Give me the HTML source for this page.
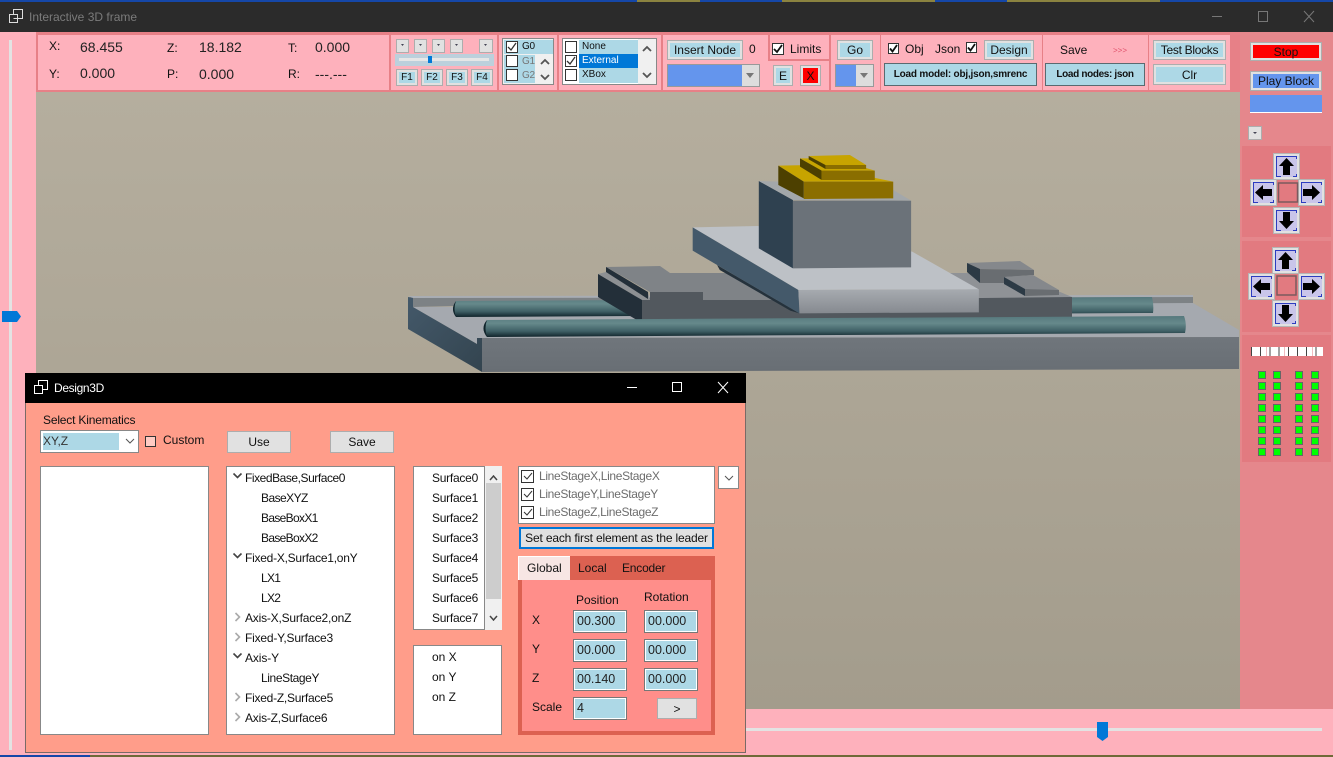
<!DOCTYPE html>
<html><head><meta charset="utf-8"><style>
html,body{margin:0;padding:0;width:1333px;height:757px;overflow:hidden;background:#2b2b2b}
body{position:relative;font-family:"Liberation Sans",sans-serif;font-size:12px;color:#111}
div,span,svg{position:absolute;box-sizing:border-box}
.t{white-space:nowrap;line-height:16px;height:16px}
.v{font-size:14px;line-height:18px;height:18px;color:#222;white-space:nowrap}
.b{background:#e1e1e1;border:1px solid #adadad;text-align:center;white-space:nowrap}
.bi{background:#add8e6;border:3px solid #e1e1e1;outline:1px solid #adadad;outline-offset:-1px;text-align:center;white-space:nowrap;display:flex;align-items:center;justify-content:center}
.cb{width:12px;height:12px;background:#fff;border:1px solid #333}
.lb{background:#add8e6}
.white{background:#fff;border:1px solid #888}
.s10{font-size:10px}
.in{background:#add8e6;border:1px solid #777;box-shadow:inset 0 0 0 1px #fff;padding-left:3px;font-size:12.5px;line-height:21px;color:#222}
</style></head><body>

<!-- wallpaper strips -->
<div style="left:0;top:0;width:1333px;height:2px;background:#1547a8"></div>
<div style="left:637px;top:0;width:63px;height:2px;background:#8b8340"></div>
<div style="left:782px;top:0;width:153px;height:2px;background:#8b8340"></div>
<div style="left:1007px;top:0;width:153px;height:2px;background:#8b8340"></div>
<div style="left:0;top:755px;width:1333px;height:2px;background:#6f6a38"></div>
<div style="left:0;top:755px;width:90px;height:2px;background:#1547a8"></div>

<!-- title bar -->
<div style="left:0;top:2px;width:1333px;height:30px;background:#2b2b2b"></div>
<svg style="left:8px;top:8px" width="16" height="16" viewBox="0 0 16 16" fill="none" stroke="#ddd" stroke-width="1"><rect x="5.5" y="1.5" width="9" height="9"/><rect x="1.5" y="6.5" width="8" height="8" fill="#2b2b2b"/><line x1="5.5" y1="10.5" x2="9.5" y2="10.5"/></svg>
<div class="t" style="left:29px;top:9px;color:#7b7b7b">Interactive 3D frame</div>
<svg style="left:1205px;top:8px" width="120" height="16" fill="none" stroke="#777" stroke-width="1"><line x1="7" y1="8.5" x2="17" y2="8.5"/><rect x="53.5" y="3.5" width="9" height="10"/><path d="M99 3l10 11M109 3l-10 11"/></svg>

<!-- main background -->
<div style="left:0;top:32px;width:36px;height:723px;background:#feb1bc"></div>
<div style="left:36px;top:92px;width:1204px;height:618px;background:linear-gradient(#b5ae9e,#a39c8c)"></div>

<!-- 3D scene -->
<svg style="left:400px;top:140px" width="840" height="240">
<defs>
<linearGradient id="rod" x1="0" y1="0" x2="0" y2="1"><stop offset="0" stop-color="#56797d"/><stop offset=".35" stop-color="#66898b"/><stop offset=".72" stop-color="#3f6066"/><stop offset="1" stop-color="#10232a"/></linearGradient>
<linearGradient id="fr" x1="0" y1="0" x2="0" y2="1"><stop offset="0" stop-color="#a7abb0"/><stop offset="1" stop-color="#868a90"/></linearGradient>
<linearGradient id="lf" x1="0" y1="0" x2="1" y2="1"><stop offset="0" stop-color="#44596a"/><stop offset="1" stop-color="#33444f"/></linearGradient>
<linearGradient id="bf" x1="0" y1="0" x2="0" y2="1"><stop offset="0" stop-color="#70767c"/><stop offset="1" stop-color="#686e74"/></linearGradient>
</defs>
<g transform="translate(-400 -140)">
<!-- base -->
<polygon points="408,297 1193,296 1193,303 1153,305 453,306 413,307 413,298" fill="#7d8285"/>
<polygon points="408,296 1193,295 1193,297 413,298" fill="#a9adb3"/>
<polygon points="413,307 1193,303 1239,330 1239,337 482,338 477,338 477,344" fill="#a5a9af"/>
<polygon points="408,297 413,298 413,307 477,344 477,338 482,338 482,372 408,329" fill="url(#lf)"/>
<polygon points="482,338 1239,337 1239,369 482,372" fill="url(#bf)"/>
<!-- rear rod -->
<path d="M456 301L1152 297Q1154 305 1153 313L456 317Q450 309 456 301Z" fill="url(#rod)"/>
<path d="M456 301Q450 309 456 317Q453 309 456 301Z" fill="#10232a"/>
<!-- carriage -->
<polygon points="950,273 1015,273 1072,297 979,300" fill="#8f9296"/>
<polygon points="606,267 660,266 670,273 730,273 790,300 703,300 703,292 650,292" fill="#7f8387"/>
<polygon points="598,274 642,300 650,300 648,292 606,272" fill="#8d9093"/>
<polygon points="598,274 598,297 642,323 642,300" fill="#232f39"/>
<polygon points="606,267 606,272 648,299 648,292" fill="#232f39"/>
<polygon points="642,300 650,300 650,292 703,292 703,300 790,300 1072,297 1072,321 642,323" fill="#52585e"/>
<!-- front rod -->
<path d="M487 320L1184 316Q1187 324 1185 333L487 337Q480 328 487 320Z" fill="url(#rod)"/>
<path d="M487 320Q480 328 487 337Q484 328 487 320Z" fill="#10232a"/>
<!-- right blocks -->
<polygon points="967,263 1020,261 1034,270 980,269" fill="#85888c"/>
<polygon points="967,263 967,272 980,283 980,269" fill="#2c3a45"/>
<polygon points="980,269 1034,270 1034,275 1004,277 1004,283 980,283" fill="#696d71"/>
<polygon points="1004,277 1033,275 1059,290 1025,289" fill="#85888c"/>
<polygon points="1004,277 1004,284 1025,296 1025,289" fill="#2c3a45"/>
<polygon points="1025,289 1059,290 1059,295 1025,296" fill="#696d71"/>
</g>
<g transform="scale(.542 .3333)">
<polygon points="585,375 590,390 720,512 737,520" fill="#25323c"/>
<polygon points="540,262 660,258 945,335 1068,448 735,450" fill="#bdc1c6"/>
<polygon points="540,262 540,332 737,520 735,450" fill="#44596a"/>
<polygon points="735,450 1068,448 1068,517 737,520" fill="url(#fr)"/>
<polygon points="662,123 662,325 725,385 725,180" fill="#2f4150"/>
<polygon points="725,182 943,182 943,382 725,385" fill="#6b7279"/>
<polygon points="662,123 725,180 943,182 910,150 700,125" fill="#a3a7aa"/>
<polygon points="698,77 760,75 910,125 745,125" fill="#c7a400"/>
<polygon points="698,77 698,135 745,175 745,125" fill="#4d4000"/>
<polygon points="745,125 910,125 910,175 745,177" fill="#8b6e00"/>
<polygon points="738,55 800,55 876,92 778,92" fill="#c7a400"/>
<polygon points="738,55 738,80 778,120 778,92" fill="#4d4000"/>
<polygon points="778,92 876,92 876,120 778,120" fill="#8a6e00"/>
<polygon points="754,48 830,45 860,75 785,75" fill="#c7a400"/>
<polygon points="754,48 754,58 785,87 785,75" fill="#4d4000"/>
<polygon points="785,75 860,75 860,87 785,87" fill="#8a6e00"/>
</g>
</svg>

<!-- toolbar -->
<div style="left:36px;top:32px;width:1204px;height:60px;background:#e78087"></div>
<div style="left:38px;top:35px;width:1192px;height:55px;background:#feb1bc"></div>
<div style="left:389px;top:35px;width:2px;height:55px;background:#e78087"></div>
<div style="left:497px;top:35px;width:2px;height:55px;background:#e78087"></div>
<div style="left:557px;top:35px;width:2px;height:55px;background:#e78087"></div>
<div style="left:661px;top:35px;width:2px;height:55px;background:#e78087"></div>
<div style="left:768px;top:35px;width:2px;height:26px;background:#e78087"></div>
<div style="left:768px;top:59px;width:62px;height:2px;background:#e78087"></div>
<div style="left:829px;top:35px;width:2px;height:55px;background:#e78087"></div>
<div style="left:880px;top:35px;width:1px;height:55px;background:#e78087"></div>
<div style="left:1042px;top:35px;width:1px;height:55px;background:#e78087"></div>
<div style="left:1148px;top:35px;width:1px;height:55px;background:#e78087"></div>

<div class="t" style="left:49px;top:38px">X:</div><div class="v" style="left:80px;top:38px">68.455</div>
<div class="t" style="left:167px;top:40px">Z:</div><div class="v" style="left:199px;top:38px">18.182</div>
<div class="t" style="left:288px;top:40px">T:</div><div class="v" style="left:315px;top:38px">0.000</div>
<div class="t" style="left:49px;top:66px">Y:</div><div class="v" style="left:80px;top:64px">0.000</div>
<div class="t" style="left:167px;top:66px">P:</div><div class="v" style="left:199px;top:65px">0.000</div>
<div class="t" style="left:288px;top:66px">R:</div><div class="v" style="left:315px;top:65px">---.---</div>

<!-- small buttons -->
<svg style="left:395px;top:38px" width="100" height="16">
<g fill="#e1e1e1" stroke="#adadad"><rect x="1.5" y="1.5" width="12" height="13"/><rect x="19.5" y="1.5" width="12" height="13"/><rect x="37.5" y="1.5" width="12" height="13"/><rect x="55.5" y="1.5" width="12" height="13"/><rect x="84.5" y="1.5" width="13" height="13"/></g>
<g fill="#445"><path d="M6 6h3L7.500 8zM24 6h3L25.500 8zM42 6h3L43.500 8zM60 6h3L61.500 8zM89 6h3L90.500 8z"/></g></svg>
<div style="left:395px;top:54px;width:99px;height:12px;background:#bcd0dc"></div>
<div style="left:399px;top:58px;width:90px;height:3px;background:#e6e6e6"></div>
<div style="left:428px;top:56px;width:4px;height:7px;background:#0078d7"></div>
<div class="bi s10" style="left:396px;top:69px;width:22px;height:17px">F1</div>
<div class="bi s10" style="left:421px;top:69px;width:22px;height:17px">F2</div>
<div class="bi s10" style="left:446px;top:69px;width:22px;height:17px">F3</div>
<div class="bi s10" style="left:471px;top:69px;width:22px;height:17px">F4</div>

<!-- G list -->
<div class="white" style="left:502px;top:38px;width:52px;height:47px;background:#f0f0f0"></div>
<div class="lb" style="left:504px;top:40px;width:49px;height:14px"></div>
<div class="lb" style="left:504px;top:55px;width:31px;height:28px"></div>
<div class="cb" style="left:506px;top:41px"></div><div class="cb" style="left:506px;top:55px"></div><div class="cb" style="left:506px;top:69px"></div>
<svg style="left:506px;top:41px" width="12" height="12" fill="none" stroke="#333" stroke-width="1.300"><path d="M2 6l3 3 5-7"/></svg>
<div class="t s10" style="left:522px;top:39px;letter-spacing:-.3px">G0</div>
<div class="t s10" style="left:522px;top:54px;color:#777;letter-spacing:-.3px">G1</div>
<div class="t s10" style="left:522px;top:68px;color:#777;letter-spacing:-.3px">G2</div>
<svg style="left:538px;top:55px" width="14" height="28" fill="none" stroke="#555" stroke-width="1.800"><path d="M3 9l4-4 4 4M3 20l4 4 4-4"/></svg>

<!-- input list -->
<div class="white" style="left:562px;top:38px;width:95px;height:47px"></div>
<div class="lb" style="left:579px;top:40px;width:59px;height:14px"></div>
<div style="left:579px;top:54px;width:59px;height:14px;background:#0078d7"></div>
<div class="lb" style="left:579px;top:68px;width:59px;height:15px"></div>
<div style="left:638px;top:39px;width:18px;height:45px;background:#f0f0f0"></div>
<div class="cb" style="left:565px;top:41px"></div><div class="cb" style="left:565px;top:55px"></div><div class="cb" style="left:565px;top:69px"></div>
<svg style="left:565px;top:55px" width="12" height="12" fill="none" stroke="#333" stroke-width="1.300"><path d="M2 6l3 3 5-7"/></svg>
<div class="t s10" style="left:582px;top:39px">None</div>
<div class="t s10" style="left:582px;top:53px;color:#fff">External</div>
<div class="t s10" style="left:582px;top:67px">XBox</div>
<svg style="left:640px;top:40px" width="14" height="44" fill="none" stroke="#555" stroke-width="1.800"><path d="M3 11l4-4 4 4M3 33l4 4 4-4"/></svg>

<!-- insert node -->
<div class="bi" style="left:667px;top:40px;width:76px;height:20px">Insert Node</div>
<div class="t" style="left:749px;top:41px">0</div>
<div style="left:667px;top:64px;width:93px;height:23px;background:#6495ed;border:1px solid #999"></div>
<div style="left:742px;top:65px;width:17px;height:21px;background:#ddd"></div>
<svg style="left:742px;top:65px" width="17" height="21"><path d="M4 8h8l-4 5z" fill="#777"/></svg>

<div class="cb" style="left:772px;top:43px"></div>
<svg style="left:772px;top:43px" width="12" height="12" fill="none" stroke="#111" stroke-width="1.800"><path d="M2 6l3 3 5-7"/></svg>
<div class="t" style="left:790px;top:41px">Limits</div>
<div class="bi" style="left:837px;top:40px;width:36px;height:20px">Go</div>
<div class="bi" style="left:773px;top:65px;width:20px;height:21px">E</div>
<div class="bi" style="left:800px;top:65px;width:21px;height:21px;background:#f00">X</div>
<div style="left:835px;top:64px;width:39px;height:23px;background:#6495ed;border:1px solid #999"></div>
<div style="left:856px;top:65px;width:17px;height:21px;background:#ddd"></div>
<svg style="left:856px;top:65px" width="17" height="21"><path d="M4 8h8l-4 5z" fill="#777"/></svg>

<div class="cb" style="left:888px;top:43px;width:11px;height:11px"></div>
<svg style="left:888px;top:43px" width="11" height="11" fill="none" stroke="#111" stroke-width="1.800"><path d="M2 5.500l2.500 3L9 2"/></svg>
<div class="t" style="left:905px;top:41px">Obj</div>
<div class="t" style="left:935px;top:41px">Json</div>
<div class="cb" style="left:966px;top:42px;width:11px;height:11px"></div>
<svg style="left:966px;top:42px" width="11" height="11" fill="none" stroke="#111" stroke-width="1.800"><path d="M2 5.500l2.500 3L9 2"/></svg>
<div class="bi" style="left:984px;top:40px;width:50px;height:20px">Design</div>
<div class="lb" style="left:884px;top:63px;width:153px;height:23px;border:1px solid #5a6a70;text-align:center;font-weight:bold;font-size:10px;line-height:21px;letter-spacing:-.2px">Load model: obj,json,smrenc</div>
<div class="t" style="left:1060px;top:42px">Save</div>
<div class="t" style="left:1113px;top:43px;color:#e0506a;font-size:8px">&gt;&gt;&gt;</div>
<div class="lb" style="left:1045px;top:63px;width:100px;height:23px;border:1px solid #5a6a70;text-align:center;font-weight:bold;font-size:10px;line-height:21px;letter-spacing:-.35px">Load nodes: json</div>
<div class="bi" style="left:1153px;top:40px;width:73px;height:20px;letter-spacing:-.3px">Test Blocks</div>
<div class="bi" style="left:1153px;top:64px;width:73px;height:21px">Clr</div>

<!-- right panel -->
<div style="left:1240px;top:32px;width:93px;height:678px;background:#e5878c"></div>
<div style="left:1242px;top:146px;width:89px;height:91px;background:#e27a80"></div>
<div style="left:1242px;top:241px;width:89px;height:91px;background:#e27a80"></div>
<div style="left:1242px;top:335px;width:89px;height:127px;background:#e27a80"></div>
<div class="bi" style="left:1250px;top:42px;width:72px;height:19px;background:#f00">Stop</div>
<div class="bi" style="left:1250px;top:71px;width:72px;height:20px;background:#6495ed">Play Block</div>
<div style="left:1250px;top:95px;width:72px;height:18px;background:#6495ed;border-bottom:1px solid #fff"></div>
<svg style="left:1248px;top:126px" width="14" height="14"><rect x=".5" y=".5" width="13" height="13" fill="#e1e1e1" stroke="#adadad"/><path d="M5 6h4L7 8z" fill="#445"/></svg>

<svg style="left:1248px;top:150px" width="82" height="178">
<defs>
<g id="bt"><rect x=".5" y=".5" width="26" height="26" fill="#e1e1e1" stroke="#b5b5b5"/><rect x="3" y="3" width="21" height="21" fill="#c9c5ea"/><path d="M3.500 24V3.500H24M3.500 23.500H8M23.500 3.500V6M23.500 21V23.500H20" fill="none" stroke="#2c3cc0" stroke-width="1"/></g>
<path id="au" d="M13.500 5L21 13H17V22H10V13H6Z"/>
<path id="ad" d="M10 5H17V14H21L13.500 22 6 14H10Z"/>
<path id="al" d="M5 13.500L13 6V10H22V17H13V21Z"/>
<path id="ar" d="M22 13.500L14 6V10H5V17H14V21Z"/>
</defs>
<g transform="translate(25 3)"><use href="#bt"/><use href="#au"/></g>
<g transform="translate(2 29)"><use href="#bt"/><use href="#al"/></g>
<g transform="translate(50 29)"><use href="#bt"/><use href="#ar"/></g>
<g transform="translate(25 57)"><use href="#bt"/><use href="#ad"/></g>
<rect x="30.500" y="33" width="19" height="19" fill="none" stroke="#7a5a5e" stroke-width="1.500"/>
<g transform="translate(24 97)"><use href="#bt"/><use href="#au"/></g>
<g transform="translate(0 123)"><use href="#bt"/><use href="#al"/></g>
<g transform="translate(50 123)"><use href="#bt"/><use href="#ar"/></g>
<g transform="translate(24 150)"><use href="#bt"/><use href="#ad"/></g>
<rect x="29" y="126" width="19" height="19" fill="none" stroke="#7a5a5e" stroke-width="1.500"/>
</svg>
<div style="left:1251px;top:347px;width:72px;height:9px;background:repeating-linear-gradient(90deg,#444 0,#444 1px,#fff 1px,#fff 6px,#e27a80 6px,#e27a80 6.200px,#fff 6.200px,#fff 9.200px)"></div>
<svg style="left:1257px;top:370px" width="62" height="90">
<defs><pattern id="led" width="62" height="11" patternUnits="userSpaceOnUse">
<g fill="#00ff00" stroke="#666"><rect x="1.500" y="1.500" width="7" height="7"/><rect x="16.500" y="1.500" width="7" height="7"/><rect x="38.500" y="1.500" width="7" height="7"/><rect x="54.500" y="1.500" width="7" height="7"/></g>
</pattern></defs>
<rect width="62" height="88" fill="url(#led)"/></svg>

<!-- bottom slider -->
<div style="left:0;top:709px;width:1333px;height:46px;background:#feb1bc"></div>
<div style="left:745px;top:728px;width:577px;height:3px;background:#e3e3e3"></div>
<svg style="left:1097px;top:722px" width="11" height="20"><path d="M0 0H11V15L5.500 19 0 15Z" fill="#0078d7"/></svg>

<!-- left slider -->
<div style="left:9px;top:40px;width:3px;height:710px;background:#e3e3e3"></div>
<svg style="left:2px;top:311px" width="20" height="12"><path d="M0 0H15L19 5.5 15 11H0Z" fill="#0078d7"/></svg>

<!-- Design3D window -->
<div style="left:25px;top:373px;width:721px;height:380px;background:#ff9d8a;border:1px solid #7a6a66"></div>
<div style="left:25px;top:373px;width:721px;height:30px;background:#000"></div>
<svg style="left:33px;top:379px" width="16" height="16" fill="none" stroke="#fff" stroke-width="1"><rect x="5.500" y="1.500" width="9" height="9"/><rect x="1.500" y="6.500" width="8" height="8" fill="#000"/></svg>
<div class="t" style="left:54px;top:380px;color:#fff;letter-spacing:-.35px">Design3D</div>
<svg style="left:620px;top:378px" width="120" height="20" fill="none" stroke="#fff" stroke-width="1"><line x1="7" y1="9.500" x2="17" y2="9.500"/><rect x="52.500" y="4.500" width="9" height="9"/><path d="M98 4l10 11M108 4l-10 11"/></svg>

<div class="t" style="left:43px;top:412px;letter-spacing:-.18px">Select Kinematics</div>
<div class="white" style="left:40px;top:430px;width:99px;height:23px"></div>
<div class="lb" style="left:43px;top:433px;width:76px;height:17px;line-height:16px;color:#333">XY,Z</div>
<svg style="left:124px;top:437px" width="12" height="9" fill="none" stroke="#555"><path d="M2 2l4 4 4-4"/></svg>
<div style="left:145px;top:436px;width:11px;height:11px;background:#ffcbc3;border:1px solid #333"></div>
<div class="t" style="left:163px;top:432px">Custom</div>
<div class="b" style="left:227px;top:431px;width:64px;height:22px;line-height:20px">Use</div>
<div class="b" style="left:330px;top:431px;width:64px;height:22px;line-height:20px">Save</div>

<div class="white" style="left:40px;top:466px;width:169px;height:269px"></div>
<div class="white" style="left:226px;top:466px;width:169px;height:269px"></div>
<svg style="left:230px;top:470px" width="14" height="260" fill="none" stroke="#444" stroke-width="1.600">
<path d="M3.500 3.500l4 4 4-4M3.500 83.500l4 4 4-4M3.500 183.500l4 4 4-4"/><g stroke="#aaa"><path d="M5.500 143l4 4-4 4M5.500 163l4 4-4 4M5.500 223l4 4-4 4M5.500 243l4 4-4 4"/></g></svg>
<div class="t" style="left:245px;top:470px;letter-spacing:-.45px">FixedBase,Surface0</div>
<div class="t" style="left:261px;top:490px;letter-spacing:-.55px">BaseXYZ</div>
<div class="t" style="left:261px;top:510px;letter-spacing:-.67px">BaseBoxX1</div>
<div class="t" style="left:261px;top:530px;letter-spacing:-.67px">BaseBoxX2</div>
<div class="t" style="left:245px;top:550px;letter-spacing:-.25px">Fixed-X,Surface1,onY</div>
<div class="t" style="left:261px;top:570px;letter-spacing:-.7px">LX1</div>
<div class="t" style="left:261px;top:590px;letter-spacing:-.7px">LX2</div>
<div class="t" style="left:245px;top:610px;letter-spacing:-.2px">Axis-X,Surface2,onZ</div>
<div class="t" style="left:245px;top:630px;letter-spacing:-.2px">Fixed-Y,Surface3</div>
<div class="t" style="left:245px;top:650px;letter-spacing:-.1px">Axis-Y</div>
<div class="t" style="left:261px;top:670px;letter-spacing:-.4px">LineStageY</div>
<div class="t" style="left:245px;top:690px;letter-spacing:-.25px">Fixed-Z,Surface5</div>
<div class="t" style="left:245px;top:710px;letter-spacing:-.2px">Axis-Z,Surface6</div>

<div class="white" style="left:413px;top:466px;width:72px;height:164px"></div>
<div style="left:485px;top:466px;width:17px;height:164px;background:#f0f0f0"></div>
<div style="left:486px;top:483px;width:15px;height:116px;background:#cdcdcd"></div>
<svg style="left:487px;top:470px" width="13" height="156" fill="none" stroke="#444" stroke-width="1.500"><path d="M3 10l3.500-4 3.500 4M3 146l3.500 4 3.500-4"/></svg>
<div class="t" style="left:432px;top:470px;letter-spacing:-.25px">Surface0</div>
<div class="t" style="left:432px;top:490px;letter-spacing:-.25px">Surface1</div>
<div class="t" style="left:432px;top:510px;letter-spacing:-.25px">Surface2</div>
<div class="t" style="left:432px;top:530px;letter-spacing:-.25px">Surface3</div>
<div class="t" style="left:432px;top:550px;letter-spacing:-.25px">Surface4</div>
<div class="t" style="left:432px;top:570px;letter-spacing:-.25px">Surface5</div>
<div class="t" style="left:432px;top:590px;letter-spacing:-.25px">Surface6</div>
<div class="t" style="left:432px;top:610px;letter-spacing:-.25px">Surface7</div>

<div class="white" style="left:413px;top:645px;width:89px;height:90px"></div>
<div class="t" style="left:432px;top:649px">on X</div>
<div class="t" style="left:432px;top:669px">on Y</div>
<div class="t" style="left:432px;top:689px">on Z</div>

<div class="white" style="left:518px;top:466px;width:197px;height:58px"></div>
<svg style="left:521px;top:469px" width="14" height="52" fill="none" stroke="#333"><rect x=".5" y="1.500" width="12" height="12" fill="#fff"/><rect x=".5" y="19.500" width="12" height="12" fill="#fff"/><rect x=".5" y="37.500" width="12" height="12" fill="#fff"/><path d="M3 7l3 3 5-6M3 25l3 3 5-6M3 43l3 3 5-6"/></svg>
<div class="t" style="left:539px;top:468px;color:#6d6d6d;letter-spacing:-.33px">LineStageX,LineStageX</div>
<div class="t" style="left:539px;top:486px;color:#6d6d6d;letter-spacing:-.33px">LineStageY,LineStageY</div>
<div class="t" style="left:539px;top:504px;color:#6d6d6d;letter-spacing:-.33px">LineStageZ,LineStageZ</div>
<div class="white" style="left:718px;top:466px;width:21px;height:23px"></div>
<svg style="left:723px;top:474px" width="12" height="9" fill="none" stroke="#555"><path d="M2 2l4 4 4-4"/></svg>
<div style="left:519px;top:527px;width:195px;height:22px;background:#e1e1e1;border:2px solid #0078d7;text-align:center;line-height:18px;white-space:nowrap;letter-spacing:-.17px">Set each first element as the leader</div>

<div style="left:518px;top:556px;width:197px;height:179px;background:#dc6151"></div>
<div style="left:522px;top:580px;width:189px;height:151px;background:#ff8e8a"></div>
<div style="left:518px;top:556px;width:52px;height:24px;background:#f7e6e4;border-top:1px solid #fff;border-left:1px solid #fff"></div>
<div class="t" style="left:527px;top:560px">Global</div>
<div class="t" style="left:578px;top:560px">Local</div>
<div class="t" style="left:622px;top:560px;letter-spacing:-.2px">Encoder</div>
<div class="t" style="left:576px;top:592px">Position</div>
<div class="t" style="left:644px;top:589px">Rotation</div>
<div class="t" style="left:532px;top:612px">X</div>
<div class="t" style="left:532px;top:641px">Y</div>
<div class="t" style="left:532px;top:670px">Z</div>
<div class="t" style="left:532px;top:699px">Scale</div>
<div class="in" style="left:573px;top:610px;width:54px;height:23px">00.300</div>
<div class="in" style="left:644px;top:610px;width:54px;height:23px">00.000</div>
<div class="in" style="left:573px;top:639px;width:54px;height:23px">00.000</div>
<div class="in" style="left:644px;top:639px;width:54px;height:23px">00.000</div>
<div class="in" style="left:573px;top:668px;width:54px;height:23px">00.140</div>
<div class="in" style="left:644px;top:668px;width:54px;height:23px">00.000</div>
<div class="in" style="left:573px;top:697px;width:54px;height:23px">4</div>
<div class="b" style="left:657px;top:698px;width:40px;height:21px;line-height:20px">&gt;</div>

</body></html>
